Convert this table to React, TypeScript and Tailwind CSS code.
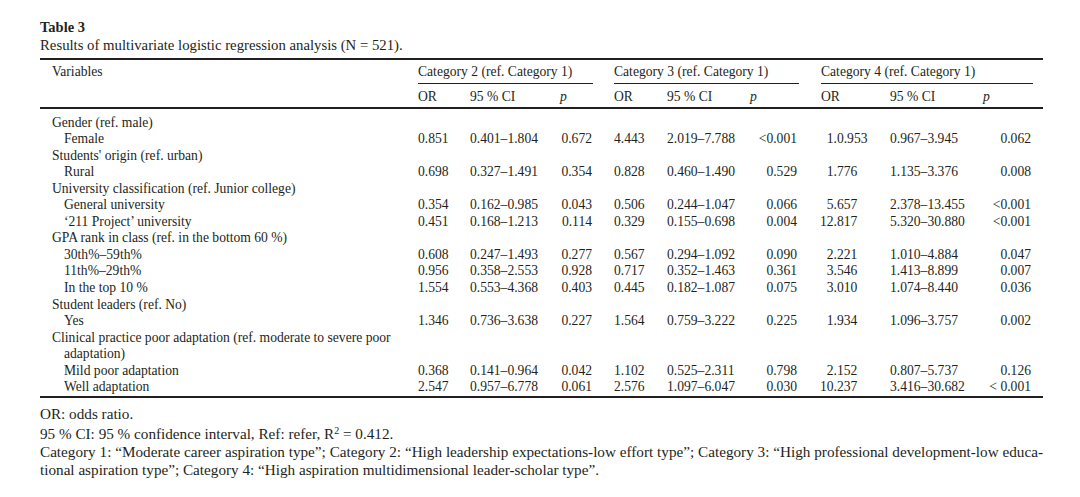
const cols =
  "grid grid-cols-[378px_52px_88px_35px_21px_53px_82px_50px_20px_70px_93px_51px_10px]";

type Row = { label: string; indent?: boolean; v?: string[] };

const rows: Row[] = [
  { label: "Gender (ref. male)" },
  {
    label: "Female",
    indent: true,
    v: ["0.851", "0.401–1.804", "0.672", "4.443", "2.019–7.788", "<0.001", "1.0.953", "0.967–3.945", "0.062"],
  },
  { label: "Students' origin (ref. urban)" },
  {
    label: "Rural",
    indent: true,
    v: ["0.698", "0.327–1.491", "0.354", "0.828", "0.460–1.490", "0.529", "1.776", "1.135–3.376", "0.008"],
  },
  { label: "University classification (ref. Junior college)" },
  {
    label: "General university",
    indent: true,
    v: ["0.354", "0.162–0.985", "0.043", "0.506", "0.244–1.047", "0.066", "5.657", "2.378–13.455", "<0.001"],
  },
  {
    label: "‘211 Project’ university",
    indent: true,
    v: ["0.451", "0.168–1.213", "0.114", "0.329", "0.155–0.698", "0.004", "12.817", "5.320–30.880", "<0.001"],
  },
  { label: "GPA rank in class (ref. in the bottom 60 %)" },
  {
    label: "30th%–59th%",
    indent: true,
    v: ["0.608", "0.247–1.493", "0.277", "0.567", "0.294–1.092", "0.090", "2.221", "1.010–4.884", "0.047"],
  },
  {
    label: "11th%–29th%",
    indent: true,
    v: ["0.956", "0.358–2.553", "0.928", "0.717", "0.352–1.463", "0.361", "3.546", "1.413–8.899", "0.007"],
  },
  {
    label: "In the top 10 %",
    indent: true,
    v: ["1.554", "0.553–4.368", "0.403", "0.445", "0.182–1.087", "0.075", "3.010", "1.074–8.440", "0.036"],
  },
  { label: "Student leaders (ref. No)" },
  {
    label: "Yes",
    indent: true,
    v: ["1.346", "0.736–3.638", "0.227", "1.564", "0.759–3.222", "0.225", "1.934", "1.096–3.757", "0.002"],
  },
  { label: "Clinical practice poor adaptation (ref. moderate to severe poor" },
  { label: "adaptation)", indent: true },
  {
    label: "Mild poor adaptation",
    indent: true,
    v: ["0.368", "0.141–0.964", "0.042", "1.102", "0.525–2.311", "0.798", "2.152", "0.807–5.737", "0.126"],
  },
  {
    label: "Well adaptation",
    indent: true,
    v: ["2.547", "0.957–6.778", "0.061", "2.576", "1.097–6.047", "0.030", "10.237", "3.416–30.682", "< 0.001"],
  },
];

function Rule() {
  return <div className="h-[1.5px] bg-[#231f20]" />;
}

// decimal aligned odds ratio for category 4
function Decimal({ value }: { value: string }) {
  const i = value.indexOf(".");
  return (
    <span className="whitespace-nowrap">
      <span className="inline-block w-[14.5px] text-right">{value.slice(0, i)}</span>
      {value.slice(i)}
    </span>
  );
}

function BodyRow({ row }: { row: Row }) {
  const v = row.v;
  return (
    <div className={`${cols} h-[16.56px] leading-[16.56px] whitespace-nowrap`}>
      <div className={row.indent ? "pl-[24px]" : "pl-[12px]"}>{row.label}</div>
      {v && (
        <>
          <div>{v[0]}</div>
          <div>{v[1]}</div>
          <div className="text-right pr-[1px]">{v[2]}</div>
          <div />
          <div>{v[3]}</div>
          <div>{v[4]}</div>
          <div className="text-right pr-[2px]">{v[5]}</div>
          <div />
          <div>
            <Decimal value={v[6]} />
          </div>
          <div className="pl-[1px]">{v[7]}</div>
          <div className="text-right pr-[2px]">{v[8]}</div>
          <div />
        </>
      )}
    </div>
  );
}

export default function App() {
  return (
    <div className="min-h-screen w-screen bg-white text-[#231f20] font-['Liberation_Serif',serif]">
      <div className="w-[1003px] ml-[40px] pt-[18px]">
        <div className="text-[14.5px] font-bold leading-[18px]">Table 3</div>
        <div className="text-[14.75px] leading-[19px]">
          Results of multivariate logistic regression analysis (N = 521).
        </div>

        <div className="mt-[3px] text-[13.6px]">
          <Rule />
          <div className={`${cols} leading-[16px]`}>
            <div className="pl-[12px] pt-[4px]">Variables</div>
            <div className="col-span-3 pt-[4px] pb-[3px] border-b-[1.5px] border-[#231f20]">
              Category 2 (ref. Category 1)
            </div>
            <div />
            <div className="col-span-3 pt-[4px] pb-[3px] border-b-[1.5px] border-[#231f20]">
              Category 3 (ref. Category 1)
            </div>
            <div />
            <div className="col-span-3 ml-[2px] pt-[4px] pb-[3px] border-b-[1.5px] border-[#231f20]">
              Category 4 (ref. Category 1)
            </div>
            <div />
          </div>
          <div className={`${cols} leading-[16px] pt-[5px] pb-[2.5px]`}>
            <div />
            <div>OR</div>
            <div>95 % CI</div>
            <div className="italic pl-[2px]">p</div>
            <div />
            <div>OR</div>
            <div>95 % CI</div>
            <div className="italic pl-[1px]">p</div>
            <div />
            <div className="pl-[2px]">OR</div>
            <div className="pl-[1px]">95 % CI</div>
            <div className="italic pl-[1px]">p</div>
            <div />
          </div>
          <Rule />

          <div className="pt-[6px] pb-[0.5px]">
            {rows.map((row, i) => (
              <BodyRow key={i} row={row} />
            ))}
          </div>
          <Rule />
        </div>

        <div className="mt-[7px] text-[15.2px] leading-[18px]">
          <div>OR: odds ratio.</div>
          <div className="mt-[2px]">
            95 % CI: 95 % confidence interval, Ref: refer, R
            <sup className="text-[10px] leading-none">2</sup> = 0.412.
          </div>
          <div className="text-justify [text-align-last:justify]">
            Category 1: “Moderate career aspiration type”; Category 2: “High leadership expectations-low effort type”; Category 3: “High professional development-low educa-
          </div>
          <div>tional aspiration type”; Category 4: “High aspiration multidimensional leader-scholar type”.</div>
        </div>
      </div>
    </div>
  );
}
